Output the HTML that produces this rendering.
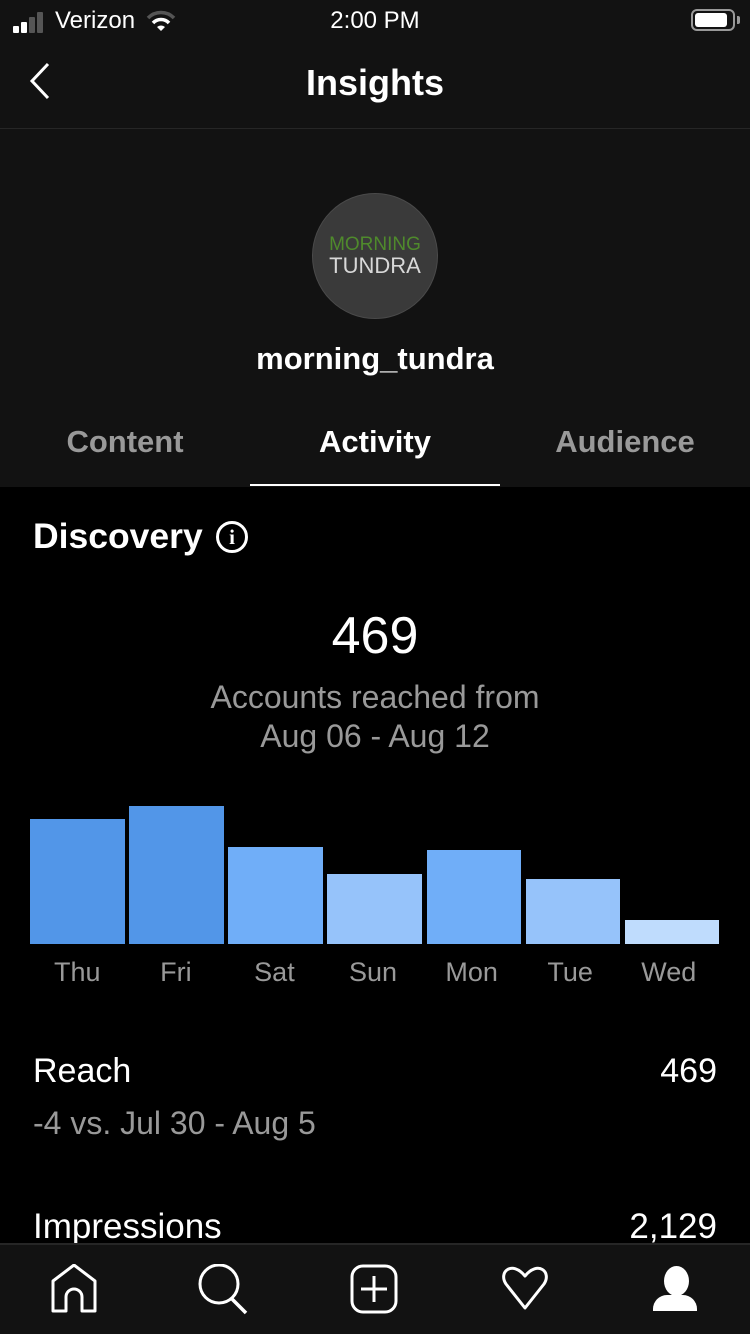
<!DOCTYPE html>
<html><head><meta charset="utf-8"><style>
*{margin:0;padding:0;box-sizing:border-box}
body{width:750px;height:1334px;background:#000;font-family:"Liberation Sans",sans-serif;color:#fff;position:relative;overflow:hidden}
.a{position:absolute}
.top{left:0;top:0;width:750px;height:487px;background:#121212}
</style></head><body>
<div class="a top"></div>
<!-- status bar -->
<div class="a" style="left:13px;top:26px;width:6px;height:7px;background:#fff;border-radius:1px"></div>
<div class="a" style="left:21px;top:22px;width:6px;height:11px;background:#fff;border-radius:1px"></div>
<div class="a" style="left:29px;top:17px;width:6px;height:16px;background:#555;border-radius:1px"></div>
<div class="a" style="left:37px;top:12px;width:6px;height:21px;background:#555;border-radius:1px"></div>
<div class="a" style="left:55px;top:7px;font-size:24px">Verizon</div>
<svg class="a" style="left:146px;top:10px" width="30" height="22" viewBox="0 0 30 22"><path d="M2 8 A18 18 0 0 1 28 8" stroke="#555" stroke-width="3.5" fill="none"/><path d="M7 13 A11 11 0 0 1 23 13" stroke="#fff" stroke-width="3.5" fill="none"/><path d="M11 17 L15 21 L19 17 A6 6 0 0 0 11 17Z" fill="#fff"/></svg>
<div class="a" style="left:0;width:750px;top:7px;text-align:center;font-size:24px">2:00 PM</div>
<div class="a" style="left:691px;top:9px;width:44px;height:22px;border:2px solid #999;border-radius:6px"></div>
<div class="a" style="left:695px;top:13px;width:32px;height:14px;background:#fff;border-radius:3px"></div>
<div class="a" style="left:737px;top:16px;width:3px;height:8px;background:#999;border-radius:0 2px 2px 0"></div>
<!-- header -->
<svg class="a" style="left:28px;top:62px" width="24" height="38" viewBox="0 0 24 38"><path d="M20 2 L4 19 L20 36" stroke="#fff" stroke-width="3" fill="none"/></svg>
<div class="a" style="left:0;width:750px;top:62px;text-align:center;font-size:36px;font-weight:bold">Insights</div>
<div class="a" style="left:0;top:128px;width:750px;height:1px;background:#262626"></div>
<!-- avatar -->
<div class="a" style="left:312px;top:193px;width:126px;height:126px;border-radius:50%;background:#3a3a3a;border:1px solid #4a4a4a"></div>
<div class="a" style="left:312px;width:126px;top:234px;text-align:center;font-size:19px;color:#4f8a2c">MORNING</div>
<div class="a" style="left:312px;width:126px;top:253px;text-align:center;font-size:22px;color:#d8d8d8">TUNDRA</div>
<div class="a" style="left:0;width:750px;top:341px;text-align:center;font-size:31px;font-weight:bold">morning_tundra</div>
<!-- tabs -->
<div class="a" style="left:0;width:250px;top:424px;text-align:center;font-size:31px;font-weight:bold;color:#999">Content</div>
<div class="a" style="left:250px;width:250px;top:424px;text-align:center;font-size:31px;font-weight:bold">Activity</div>
<div class="a" style="left:500px;width:250px;top:424px;text-align:center;font-size:31px;font-weight:bold;color:#999">Audience</div>
<div class="a" style="left:250px;top:484px;width:250px;height:2px;background:#fff"></div>
<!-- discovery -->
<div class="a" style="left:33px;top:516px;font-size:35.5px;font-weight:bold">Discovery</div>
<div class="a" style="left:216px;top:521px;width:32px;height:32px;border:3px solid #fff;border-radius:50%;text-align:center;font-size:21px;font-weight:bold;line-height:26px;font-family:'Liberation Serif',serif">i</div>
<div class="a" style="left:0;width:750px;top:606px;text-align:center;font-size:52px">469</div>
<div class="a" style="left:0;width:750px;top:678px;text-align:center;font-size:32px;color:#999;line-height:39px">Accounts reached from<br>Aug 06 - Aug 12</div>
<!-- chart -->
<div class="a" style="left:30px;top:819px;width:95px;height:125px;background:#5296e8"></div>
<div class="a" style="left:129px;top:806px;width:95px;height:138px;background:#5296e8"></div>
<div class="a" style="left:228px;top:847px;width:95px;height:97px;background:#70aef8"></div>
<div class="a" style="left:327px;top:874px;width:95px;height:70px;background:#96c3fa"></div>
<div class="a" style="left:427px;top:850px;width:94px;height:94px;background:#70aef8"></div>
<div class="a" style="left:526px;top:879px;width:94px;height:65px;background:#96c3fa"></div>
<div class="a" style="left:625px;top:920px;width:94px;height:24px;background:#bfdcfd"></div>
<div class="a" style="left:28px;top:957px;width:690px;display:flex;font-size:27px;color:#999">
<div style="width:99px;text-align:center">Thu</div><div style="width:99px;text-align:center">Fri</div><div style="width:99px;text-align:center">Sat</div><div style="width:99px;text-align:center">Sun</div><div style="width:99px;text-align:center">Mon</div><div style="width:99px;text-align:center">Tue</div><div style="width:99px;text-align:center">Wed</div></div>
<!-- reach -->
<div class="a" style="left:33px;top:1052px;font-size:34px">Reach</div>
<div class="a" style="right:33px;top:1052px;font-size:34px">469</div>
<div class="a" style="left:33px;top:1105px;font-size:32px;color:#999">-4 vs. Jul 30 - Aug 5</div>
<div class="a" style="left:33px;top:1207px;font-size:35px">Impressions</div>
<div class="a" style="right:33px;top:1207px;font-size:35px">2,129</div>
<!-- bottom nav -->
<div class="a" style="left:0;top:1243px;width:750px;height:91px;background:#121212;border-top:2px solid #262626"></div>
<svg class="a" style="left:50px;top:1264px" width="50" height="50" viewBox="0 0 50 50"><path d="M3 47 V17 L24 1 L45 17 V47 H32 V33 A8 8 0 0 0 16 33 V47 Z" stroke="#fff" stroke-width="3" fill="none" stroke-linejoin="round"/></svg>
<svg class="a" style="left:198px;top:1264px" width="54" height="52" viewBox="0 0 54 52"><ellipse cx="21" cy="20" rx="19" ry="19" stroke="#fff" stroke-width="3" fill="none"/><path d="M33 34 L48 49" stroke="#fff" stroke-width="3.5"/></svg>
<svg class="a" style="left:350px;top:1264px" width="50" height="50" viewBox="0 0 50 50"><rect x="2" y="2" width="44" height="46" rx="11" stroke="#fff" stroke-width="3" fill="none"/><path d="M24 12 V38 M11 25 H37" stroke="#fff" stroke-width="3"/></svg>
<svg class="a" style="left:500px;top:1266px" width="50" height="46" viewBox="0 0 50 46"><path d="M25 42 L6 18 C-2 6 12 -6 25 10 C38 -6 52 6 44 18 Z" stroke="#fff" stroke-width="3" fill="none" stroke-linejoin="round"/></svg>
<div class="a" style="left:664px;top:1266px;width:25px;height:30px;background:#fff;border-radius:50%"></div>
<div class="a" style="left:653px;top:1295px;width:44px;height:16px;background:#fff;border-radius:14px 14px 0 0"></div>
</body></html>
